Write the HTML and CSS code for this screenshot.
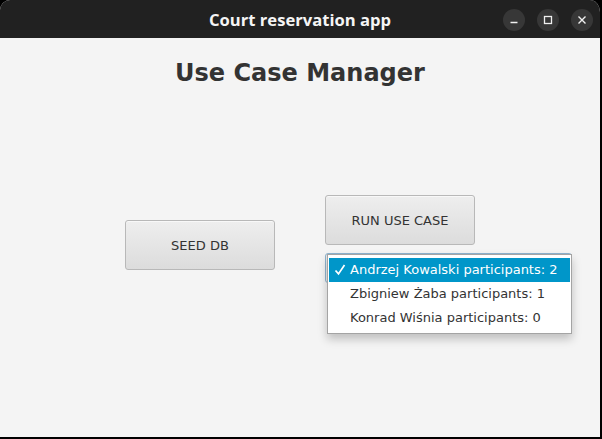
FILE: index.html
```html
<!DOCTYPE html>
<html lang="en">
<head>
<meta charset="utf-8">
<title>Court reservation app</title>
<link rel="stylesheet" href="styles.css">
</head>
<body>
<div class="window">
  <header class="titlebar">
    <span class="title">Court reservation app</span>
    <div class="controls">
      <span class="ctl">
        <svg width="10" height="10" viewBox="0 0 10 10"><path d="M1.5 7.5h7" stroke="#f0f0f0" stroke-width="1.4" fill="none"/></svg>
      </span>
      <span class="ctl">
        <svg width="10" height="10" viewBox="0 0 10 10"><rect x="1.5" y="1.5" width="7" height="7" stroke="#f0f0f0" stroke-width="1.3" fill="none"/></svg>
      </span>
      <span class="ctl">
        <svg width="10" height="10" viewBox="0 0 10 10"><path d="M1.5 1.5l7 7M8.5 1.5l-7 7" stroke="#f0f0f0" stroke-width="1.4" fill="none"/></svg>
      </span>
    </div>
  </header>
  <main class="content">
    <h1 class="heading">Use Case Manager</h1>
    <div class="row">
      <div class="col col-left">
        <button class="btn">SEED DB</button>
      </div>
      <div class="col col-right">
        <button class="btn">RUN USE CASE</button>
        <div class="combo-wrap">
          <div class="combo"></div>
          <ul class="popup">
            <li class="item selected">
              <svg class="check" width="12" height="12" viewBox="0 0 12 12"><path d="M1.5 6.5l3 3.4L10.5 1" stroke="#fff" stroke-width="1.7" fill="none"/></svg>
              Andrzej Kowalski participants: 2
            </li>
            <li class="item">Zbigniew Żaba participants: 1</li>
            <li class="item">Konrad Wiśnia participants: 0</li>
          </ul>
        </div>
      </div>
    </div>
  </main>
</div>
</body>
</html>
```

FILE: styles.css
```css
* { box-sizing: border-box; }
html, body {
  margin: 0;
  padding: 0;
  background: #000;
}
.window {
  width: 602px;
  height: 439px;
  border-right: 2px solid #000;
  border-bottom: 2px solid #000;
  background: #f4f4f4;
  display: flex;
  flex-direction: column;
  border-radius: 10px 12px 0 0;
  overflow: hidden;
}
.titlebar {
  height: 38px;
  background: #212121;
  display: flex;
  align-items: center;
  justify-content: center;
  position: relative;
  flex: none;
}
.title {
  font-family: "Open Sans", sans-serif;
  font-weight: 700;
  font-size: 16.6px;
  color: #f5f5f5;
  padding-top: 1px;
}
.controls {
  position: absolute;
  right: 7px;
  top: 9px;
  display: flex;
  gap: 12px;
}
.ctl {
  width: 22px;
  height: 22px;
  border-radius: 50%;
  background: #373737;
  display: flex;
  align-items: center;
  justify-content: center;
}
.content {
  flex: 1;
  font-family: "DejaVu Sans", sans-serif;
  color: #333;
}
.heading {
  margin: 0;
  padding-top: 20px;
  text-align: center;
  font-family: "DejaVu Sans", sans-serif;
  font-weight: 700;
  font-size: 24px;
  line-height: 30px;
  color: #333;
}
.row {
  display: flex;
  justify-content: flex-start;
  gap: 50px;
  margin-top: 107px;
  padding-left: 125px;
}
.col {
  display: flex;
  flex-direction: column;
}
.col-left { padding-top: 25px; }
.btn {
  width: 150px;
  height: 50px;
  border: 1px solid #b8b8b8;
  border-radius: 3px;
  background: linear-gradient(#eeeeee, #dcdcdc);
  box-shadow: inset 0 1px 0 #f8f8f8;
  font-family: "DejaVu Sans", sans-serif;
  font-size: 13px;
  color: #333;
  padding: 0;
}
.combo-wrap {
  position: relative;
  margin-top: 8px;
  height: 30px;
}
.combo {
  width: 247px;
  height: 30px;
  border: 1px solid #8fb4cf;
  border-radius: 3px;
  background: #ececec;
}
.popup {
  position: absolute;
  left: 2px;
  top: 1px;
  width: 245px;
  margin: 0;
  padding: 3px 1px;
  list-style: none;
  background: #fff;
  border: 1px solid #a4a4a4;
  box-shadow: 0 5px 9px rgba(0, 0, 0, 0.22);
}
.item {
  height: 24px;
  line-height: 24px;
  padding-left: 21px;
  font-size: 13px;
  color: #333;
  position: relative;
  white-space: nowrap;
}
.item.selected {
  background: #0096c9;
  color: #fff;
}
.check {
  position: absolute;
  left: 5px;
  top: 6px;
}
```
